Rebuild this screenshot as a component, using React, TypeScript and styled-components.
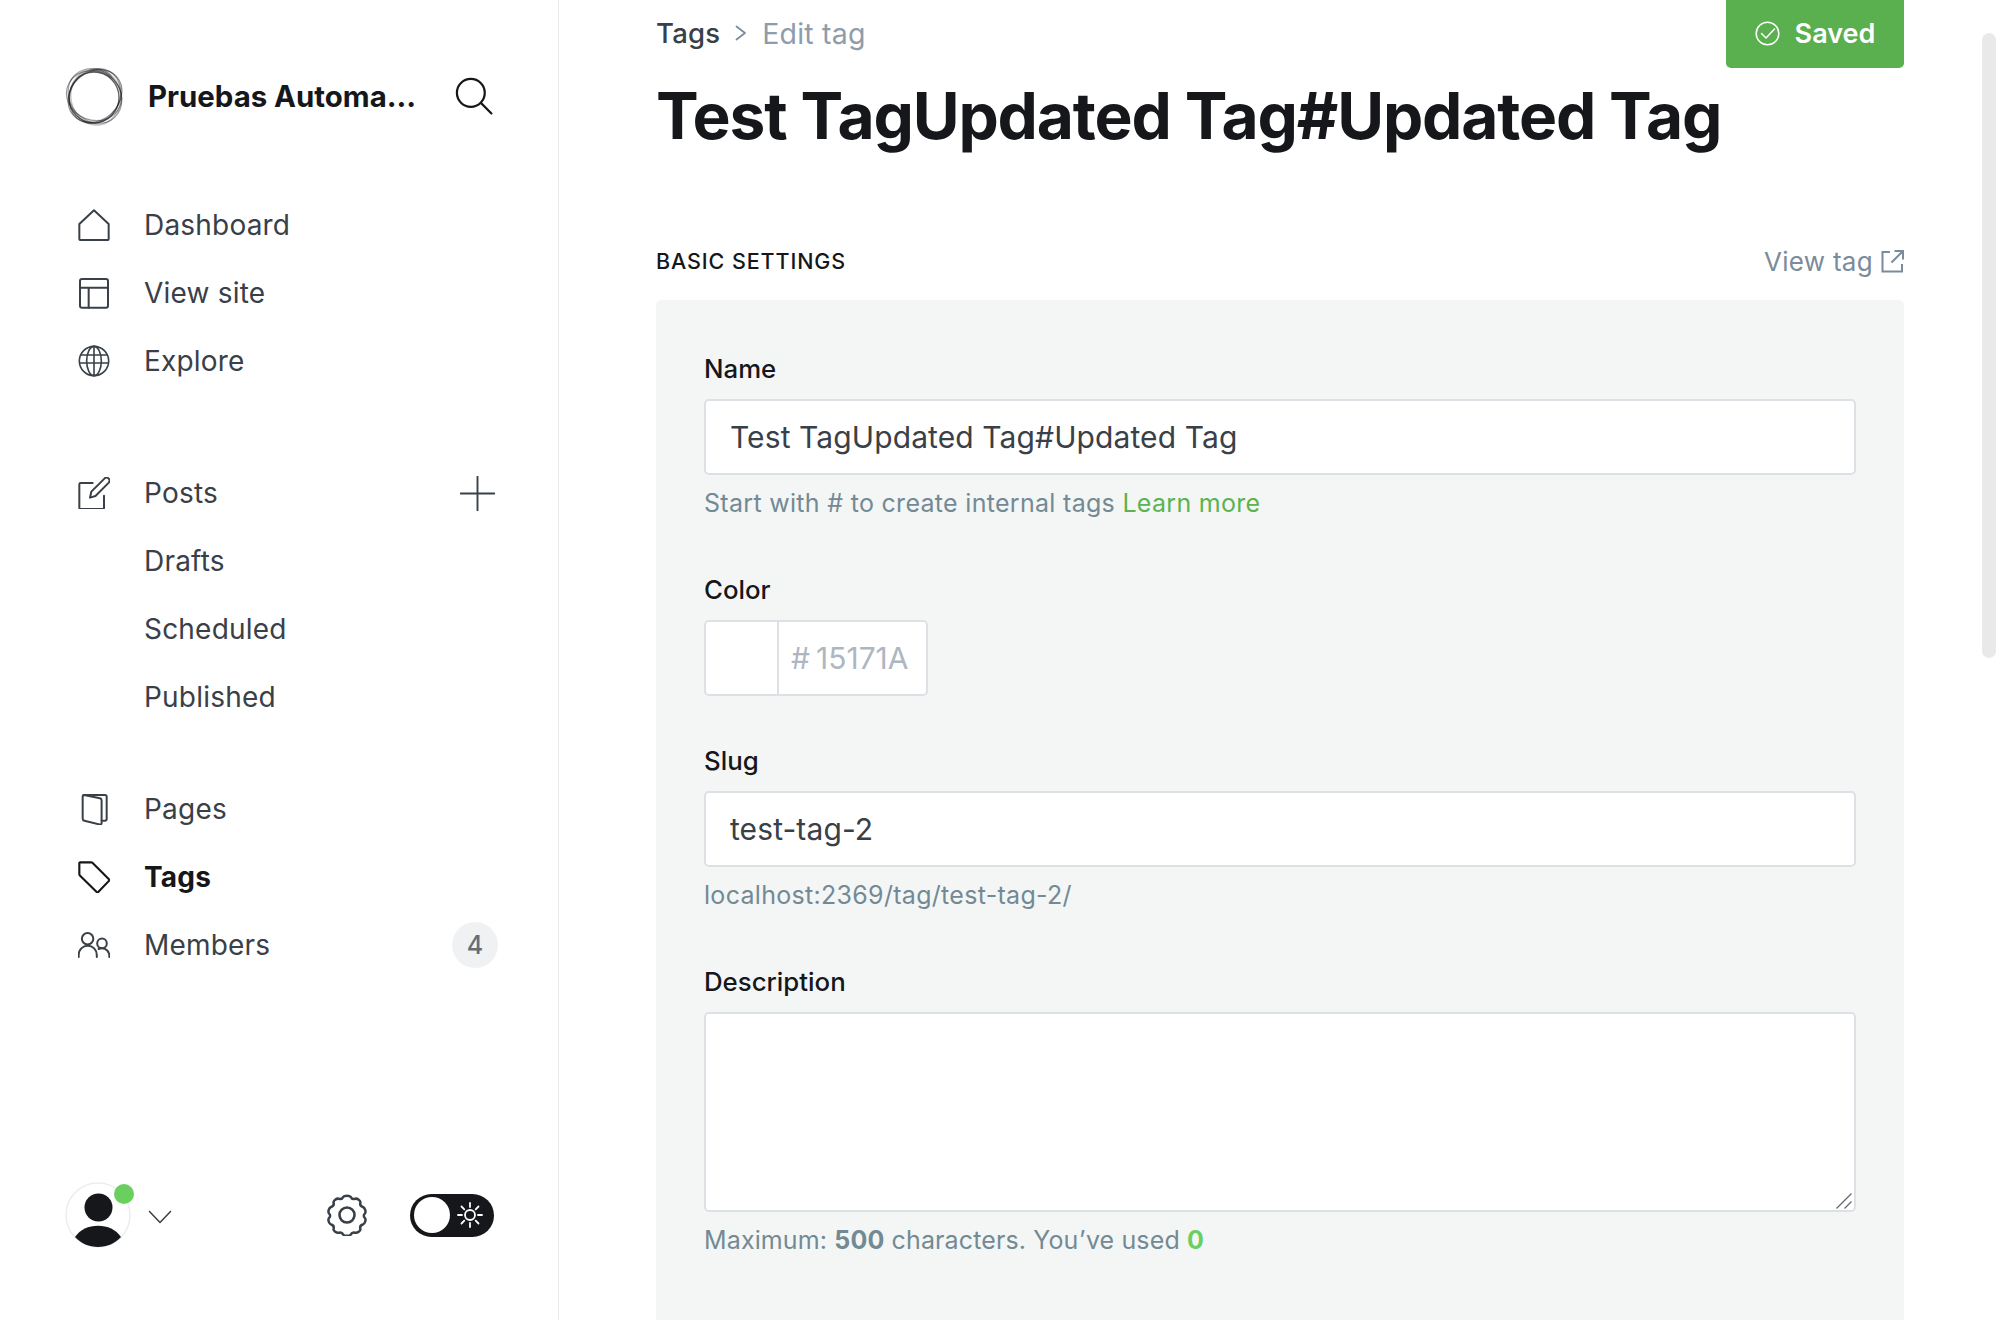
import React, { FC } from "react";
import styled, { createGlobalStyle } from "styled-components";

const GlobalStyle = createGlobalStyle`
  html, body {
    margin: 0;
    height: 100%;
    overflow: hidden;
    background: #fff;
    font-family: Inter, "Liberation Sans", sans-serif;
    color: #15171a;
  }
  * { box-sizing: border-box; }
`;

const Glyph: FC<{ size?: number; stroke?: string; sw?: number; children: React.ReactNode; box?: number }> = ({
  size = 32,
  stroke = "#394047",
  sw = 1.5,
  box = 24,
  children,
}) => (
  <svg width={size} height={size} viewBox={`0 0 ${box} ${box}`} fill="none" stroke={stroke} strokeWidth={sw} strokeLinecap="round" strokeLinejoin="round">
    {children}
  </svg>
);

const HomeIcon = () => (
  <Glyph>
    <path d="M1 11.2 12 1l11 10.2v11.3a.8.8 0 0 1-.8.8H1.8a.8.8 0 0 1-.8-.8z" />
  </Glyph>
);
const LayoutIcon = () => (
  <Glyph>
    <rect x="1.5" y="1.5" width="21" height="21.5" rx="1.5" />
    <path d="M1.5 8h21M8 8v15" />
  </Glyph>
);
const GlobeIcon = () => (
  <Glyph sw={1.2}>
    <circle cx="12" cy="12" r="11" />
    <ellipse cx="12" cy="12" rx="5.5" ry="11" />
    <path d="M2.600 7.500h18.800M1.500 13.500h21M12 1v22" />
  </Glyph>
);
const PostsIcon = () => (
  <Glyph>
    <path d="M11 4.500H2a1 1 0 0 0-1 1V23a1 1 0 0 0 1 1h16.500a1 1 0 0 0 1-1v-9" />
    <path d="M9 15.500l1-4.500 10-10c1-.8 2.200-.6 3 .2s.9 2 .1 3l-10 10z" />
  </Glyph>
);
const PlusIcon = () => (
  <Glyph size={35} sw={1.3}>
    <path d="M12 .5v23M.5 12h23" />
  </Glyph>
);
const PagesIcon = () => (
  <Glyph>
    <path d="M4.500 1.500 16.500 4c.8.2 1.200.8 1.200 1.600V22.500c0 .9-.7 1.300-1.500 1.100L4.800 20.800c-.8-.2-1.300-.8-1.300-1.600V2.500c0-.6.4-1 1-1z" />
    <path d="M4.500 1.500h15.700c.8 0 1.300.5 1.300 1.200V19.500c0 .8-.5 1.300-1.300 1.300h-2.500" />
  </Glyph>
);
const TagIcon = () => (
  <Glyph stroke="#15171a" sw={1.6}>
    <path d="M1 1.600c0-.4.3-.6.6-.6h8.200c.4 0 .8.100 1 .4l12.400 12.300c.4.4.4.9 0 1.200l-8 8.400c-.4.4-.9.4-1.200 0L1.400 10.800C1.100 10.500 1 10.200 1 9.800z" />
  </Glyph>
);
const MembersIcon = () => (
  <Glyph>
    <circle cx="7.200" cy="7.300" r="4.300" />
    <circle cx="18" cy="10.800" r="3.600" />
    <path d="M.5 21v-1.500c0-4 3-7 6.800-7s6.800 3 6.800 7V21" />
    <path d="M15.500 15c.8-.4 1.600-.6 2.500-.6 3.200 0 5.500 2.600 5.500 6V21" />
  </Glyph>
);
const SearchIcon = () => (
  <Glyph size={38} stroke="#15171a" sw={1.4}>
    <circle cx="10" cy="10" r="8.800" />
    <path d="M16.500 16.500 23 23" />
  </Glyph>
);
const ChevronIcon = () => (
  <svg width="24" height="14" viewBox="0 0 24 14" fill="none" stroke="#394047" strokeWidth="1.5" strokeLinecap="round" strokeLinejoin="round">
    <path d="M1.500 1.500 12 12.500 22.500 1.500" />
  </svg>
);
const GearIcon = () => (
  <svg width="42" height="42" viewBox="0 0 42 42" fill="none" stroke="#394047" strokeWidth="2.600" strokeLinejoin="round">
    <circle cx="21" cy="21" r="7.500" />
    <path d="M17.200 2.500c1-1.600 6.600-1.600 7.600 0 1 1.900 2.500 2.800 4.600 2 2.100-.7 6 1.900 5.400 4.100-.5 2.200.5 3.800 2.600 4.300 2.100.6 3.600 5.500 2 6.900-1.400 1.200-1.400 3.200 0 4.400 1.600 1.400.1 6.300-2 6.900-2.100.5-3.100 2.100-2.600 4.300.6 2.200-3.300 4.800-5.400 4.100-2.100-.8-3.600.1-4.600 2-1 1.600-6.600 1.600-7.600 0-1-1.900-2.500-2.800-4.600-2-2.100.7-6-1.900-5.400-4.100.5-2.200-.5-3.800-2.600-4.300-2.100-.6-3.600-5.500-2-6.900 1.400-1.200 1.400-3.200 0-4.400-1.600-1.400-.1-6.300 2-6.900 2.100-.5 3.100-2.100 2.600-4.300-.6-2.200 3.300-4.800 5.400-4.100 2.100.8 3.600-.1 4.600-2z" transform="translate(.6 .4) scale(.97)" />
  </svg>
);
const SunIcon = () => (
  <svg width="26" height="26" viewBox="0 0 26 26" fill="none" stroke="#fff" strokeWidth="1.800" strokeLinecap="round">
    <circle cx="13" cy="13" r="5" />
    <path d="M13 1v4M13 21v4M1 13h4M21 13h4M4.500 4.500l2.800 2.800M18.700 18.700l2.800 2.800M4.500 21.500l2.800-2.800M18.700 7.300l2.800-2.800" />
  </svg>
);
const CheckCircleIcon = () => (
  <svg width="25" height="25" viewBox="0 0 25 25" fill="none" stroke="#fff" strokeWidth="1.500" strokeLinecap="round" strokeLinejoin="round">
    <circle cx="12.500" cy="12.500" r="11.300" />
    <path d="M6.500 12.500l4.500 4.500 8.500-9" />
  </svg>
);
const ExternalIcon = () => (
  <svg width="23" height="23" viewBox="0 0 23 23" fill="none" stroke="#7c8b9a" strokeWidth="2">
    <path d="M9 2H1.500v19.500H21V14M13.500 1H22v8.500M22 1 10.500 12.500" />
  </svg>
);
const CrumbArrow = () => (
  <svg width="12" height="16" viewBox="0 0 12 16" fill="none" stroke="#7c8b9a" strokeWidth="1.700" strokeLinecap="round" strokeLinejoin="round">
    <path d="M1.500 1.500 10 8l-8.500 6.500" />
  </svg>
);
const GripIcon = () => (
  <svg width="16" height="16" viewBox="0 0 16 16" fill="none" stroke="#666" strokeWidth="1.300">
    <path d="M.5 15.500 15.500.5M8.500 15.500l7-7" />
  </svg>
);

// brush ring, offset ellipses laid over each other so the band thickens in places
const BrandLogo = () => (
  <svg width="60" height="60" viewBox="0 0 60 60" fill="none">
    <ellipse cx="35" cy="12" rx="13" ry="9" fill="#15171a" fillOpacity=".32" transform="rotate(14 35 12)" />
    <circle cx="30" cy="30.500" r="25" fill="#fff" />
    <g stroke="#15171a">
      <ellipse cx="29" cy="31.500" rx="25" ry="25.500" strokeWidth="1.300" strokeOpacity=".7" />
      <ellipse cx="30" cy="30" rx="29" ry="24" strokeWidth="1.200" strokeOpacity=".5" transform="rotate(-42 30 30)" />
      <ellipse cx="30" cy="30" rx="28.500" ry="24.500" strokeWidth="1.200" strokeOpacity=".45" transform="rotate(-58 30 30)" />
      <ellipse cx="29" cy="30" rx="28" ry="24.500" strokeWidth="1.200" strokeOpacity=".45" transform="rotate(22 30 30)" />
      <ellipse cx="30" cy="30" rx="29" ry="25" strokeWidth="1.100" strokeOpacity=".4" transform="rotate(48 30 30)" />
      <ellipse cx="31" cy="29.500" rx="28" ry="25" strokeWidth="1.800" strokeOpacity=".25" transform="rotate(78 30 30)" />
    </g>
  </svg>
);

const AvatarArt = () => (
  <svg width="66" height="66" viewBox="0 0 66 66">
    <circle cx="33" cy="33" r="32" fill="#fff" stroke="#ebeef0" strokeWidth="1.500" />
    <circle cx="33.500" cy="25.500" r="14" fill="#15171a" />
    <path d="M10 55c5-7.500 13.500-11.300 23-11.300S51 47.500 56 55c-6 6.500-14 10-23 10S16 61.500 10 55z" fill="#15171a" />
  </svg>
);

const Page = styled.div`
  display: grid;
  grid-template-columns: 559px 1fr;
  height: 1320px;
  overflow: hidden;
`;

const Sidebar = styled.aside`
  display: flex;
  flex-direction: column;
  height: 1320px;
  border-right: 1px solid #e6e9eb;
  padding: 60px 61px 72px 65px;
`;

const Brand = styled.div`
  display: flex;
  align-items: center;
  height: 72px;
  margin-bottom: 59px;
`;

const BrandName = styled.span`
  margin-left: 23px;
  width: 307px;
  font-size: 29.400px;
  font-weight: 700;
  white-space: nowrap;
  color: #15171a;
`;

const NavGroup = styled.nav<{ $gap?: number }>`
  display: flex;
  flex-direction: column;
  margin-bottom: ${({ $gap }) => $gap ?? 0}px;
`;

const NavRow = styled.div<{ $active?: boolean }>`
  display: flex;
  align-items: center;
  height: 68px;
  padding-left: 13px;
  font-size: 28px;
  letter-spacing: 0.2px;
  font-weight: ${({ $active }) => ($active ? 700 : 400)};
  color: ${({ $active }) => ($active ? "#15171a" : "#394047")};
`;

const NavIcon = styled.span`
  display: flex;
  width: 66px;
  flex-shrink: 0;
`;

const NavLabel = styled.span<{ $sub?: boolean }>`
  flex: 1;
  margin-left: ${({ $sub }) => ($sub ? "66px" : "0")};
`;

const Counter = styled.span`
  display: flex;
  align-items: center;
  justify-content: center;
  width: 46px;
  height: 46px;
  margin-right: -1px;
  border-radius: 50%;
  background: #eff1f3;
  color: #626d79;
  font-size: 25px;
  font-weight: 500;
`;

const AddButton = styled.span`
  display: flex;
  margin-right: 2px;
`;

const SidebarFooter = styled.div`
  display: flex;
  align-items: center;
  margin-top: auto;
`;

const Avatar = styled.div`
  position: relative;
  display: flex;
  width: 66px;
  height: 66px;
`;

const OnlineDot = styled.span`
  position: absolute;
  top: 2px;
  right: -3px;
  width: 20px;
  height: 20px;
  border-radius: 50%;
  background: #6bcf5f;
`;

const UserCaret = styled.span`
  display: flex;
  margin: 4px 0 0 17px;
`;

const FooterTools = styled.div`
  display: flex;
  align-items: center;
  margin-left: auto;
  margin-right: 3px;
  gap: 42px;
`;

const NightToggle = styled.div`
  display: flex;
  align-items: center;
  justify-content: space-between;
  width: 84px;
  height: 43px;
  padding: 0 11px 0 4px;
  border-radius: 22px;
  background: #15171a;
`;

const ToggleKnob = styled.span`
  width: 36px;
  height: 36px;
  border-radius: 50%;
  background: #fff;
`;

const Main = styled.main`
  padding: 0 96px 0 97px;
  min-width: 0;
`;

const TopBar = styled.div`
  display: flex;
  align-items: flex-start;
  justify-content: space-between;
  height: 68px;
`;

const Crumbs = styled.div`
  display: flex;
  align-items: center;
  gap: 15px;
  height: 66px;
  font-size: 27.500px;
  letter-spacing: 0.2px;
  font-weight: 500;
  color: #394047;
`;

const CrumbCurrent = styled.span`
  color: #8e9cac;
  font-size: 28.500px;
  font-weight: 400;
`;

const SaveButton = styled.div`
  display: flex;
  align-items: center;
  justify-content: center;
  gap: 15px;
  width: 178px;
  height: 68px;
  padding: 0 0 2px 0;
  border-radius: 0 0 5px 5px;
  background: #5aaf4f;
  color: #fff;
  font-size: 27px;
  font-weight: 600;
`;

const Title = styled.h1`
  margin: 9px 0 0;
  font-size: 64px;
  line-height: 78px;
  letter-spacing: -1.150px;
  font-weight: 700;
  color: #15171a;
  white-space: nowrap;
`;

const SectionHead = styled.div`
  display: flex;
  align-items: center;
  justify-content: space-between;
  height: 38px;
  margin-top: 87px;
  margin-bottom: 20px;
`;

const SectionTitle = styled.h4`
  margin: 0;
  font-size: 21.500px;
  font-weight: 500;
  letter-spacing: 0.9px;
  color: #15171a;
`;

const ViewLink = styled.span`
  display: flex;
  align-items: center;
  gap: 8px;
  font-size: 26px;
  letter-spacing: 0.3px;
  color: #7c8b9a;
`;

const Panel = styled.section`
  padding: 52px 48px 0;
  background: #f4f6f6;
  border-radius: 5px 5px 0 0;
  min-height: 1100px;
`;

const Field = styled.div<{ $after: number }>`
  margin-bottom: ${({ $after }) => $after}px;
`;

const Label = styled.label`
  display: block;
  margin-bottom: 13px;
  font-size: 25.800px;
  line-height: 34px;
  font-weight: 500;
  color: #15171a;
`;

const TextInput = styled.input`
  display: block;
  width: 100%;
  height: 76px;
  padding: 0 24px;
  border: 2px solid #dde1e5;
  border-radius: 5px;
  background: #fff;
  outline: none;
  font-family: inherit;
  font-size: 30px;
  letter-spacing: 0.1px;
  color: #394047;
`;

const AreaWrap = styled.div`
  position: relative;
`;

const TextArea = styled.textarea`
  display: block;
  width: 100%;
  height: 200px;
  padding: 16px 24px;
  border: 2px solid #dde1e5;
  border-radius: 5px;
  background: #fff;
  outline: none;
  resize: none;
  font-family: inherit;
  font-size: 30px;
`;

const AreaGrip = styled.span`
  position: absolute;
  right: 4px;
  bottom: 3px;
  display: flex;
`;

const Help = styled.p<{ $tight?: boolean }>`
  margin: 11px 0 0;
  font-size: 25px;
  line-height: 34px;
  letter-spacing: ${({ $tight }) => ($tight ? "0.13px" : "0.3px")};
  color: #738a94;
`;

const HelpLink = styled.span`
  color: #5cb34f;
  font-weight: 400;
`;

const HelpCount = styled.span`
  color: #6bcf5f;
  font-weight: 700;
`;

const HelpStrong = styled.strong`
  font-weight: 700;
`;

const ColorBox = styled.div`
  display: flex;
  width: 224px;
  height: 76px;
  border: 2px solid #dde1e5;
  border-radius: 5px;
  background: #fff;
`;

const Swatch = styled.span`
  width: 73px;
  border-right: 2px solid #dde1e5;
`;

const ColorValue = styled.span`
  display: flex;
  align-items: center;
  gap: 6px;
  padding-left: 12px;
  font-size: 30px;
  color: #aeb7c1;
`;

const ScrollThumb = styled.div`
  position: fixed;
  top: 33px;
  right: 4px;
  width: 14px;
  height: 625px;
  border-radius: 7px;
  background: #e9e9e9;
`;

const App: FC = () => (
  <>
    <GlobalStyle />
    <Page>
      <Sidebar>
        <Brand>
          <BrandLogo />
          <BrandName>Pruebas Automa...</BrandName>
          <SearchIcon />
        </Brand>

        <NavGroup $gap={64}>
          <NavRow><NavIcon><HomeIcon /></NavIcon><NavLabel>Dashboard</NavLabel></NavRow>
          <NavRow><NavIcon><LayoutIcon /></NavIcon><NavLabel>View site</NavLabel></NavRow>
          <NavRow><NavIcon><GlobeIcon /></NavIcon><NavLabel>Explore</NavLabel></NavRow>
        </NavGroup>

        <NavGroup $gap={44}>
          <NavRow>
            <NavIcon><PostsIcon /></NavIcon>
            <NavLabel>Posts</NavLabel>
            <AddButton><PlusIcon /></AddButton>
          </NavRow>
          <NavRow><NavLabel $sub>Drafts</NavLabel></NavRow>
          <NavRow><NavLabel $sub>Scheduled</NavLabel></NavRow>
          <NavRow><NavLabel $sub>Published</NavLabel></NavRow>
        </NavGroup>

        <NavGroup>
          <NavRow><NavIcon><PagesIcon /></NavIcon><NavLabel>Pages</NavLabel></NavRow>
          <NavRow $active><NavIcon><TagIcon /></NavIcon><NavLabel>Tags</NavLabel></NavRow>
          <NavRow>
            <NavIcon><MembersIcon /></NavIcon>
            <NavLabel>Members</NavLabel>
            <Counter>4</Counter>
          </NavRow>
        </NavGroup>

        <SidebarFooter>
          <Avatar>
            <AvatarArt />
            <OnlineDot />
          </Avatar>
          <UserCaret><ChevronIcon /></UserCaret>
          <FooterTools>
            <GearIcon />
            <NightToggle>
              <ToggleKnob />
              <SunIcon />
            </NightToggle>
          </FooterTools>
        </SidebarFooter>
      </Sidebar>

      <Main>
        <TopBar>
          <Crumbs>
            <span>Tags</span>
            <CrumbArrow />
            <CrumbCurrent>Edit tag</CrumbCurrent>
          </Crumbs>
          <SaveButton>
            <CheckCircleIcon />
            Saved
          </SaveButton>
        </TopBar>

        <Title>Test TagUpdated Tag#Updated Tag</Title>

        <SectionHead>
          <SectionTitle>BASIC SETTINGS</SectionTitle>
          <ViewLink>View tag <ExternalIcon /></ViewLink>
        </SectionHead>

        <Panel>
          <Field $after={53}>
            <Label>Name</Label>
            <TextInput readOnly value="Test TagUpdated Tag#Updated Tag" />
            <Help>Start with # to create internal tags <HelpLink>Learn more</HelpLink></Help>
          </Field>
          <Field $after={48}>
            <Label>Color</Label>
            <ColorBox>
              <Swatch />
              <ColorValue><span>#</span>15171A</ColorValue>
            </ColorBox>
          </Field>
          <Field $after={53}>
            <Label>Slug</Label>
            <TextInput readOnly value="test-tag-2" />
            <Help>localhost:2369/tag/test-tag-2/</Help>
          </Field>
          <Field $after={48}>
            <Label>Description</Label>
            <AreaWrap>
              <TextArea readOnly />
              <AreaGrip><GripIcon /></AreaGrip>
            </AreaWrap>
            <Help $tight>Maximum: <HelpStrong>500</HelpStrong> characters. You’ve used <HelpCount>0</HelpCount></Help>
          </Field>
        </Panel>
      </Main>
    </Page>
    <ScrollThumb />
  </>
);

export default App;
